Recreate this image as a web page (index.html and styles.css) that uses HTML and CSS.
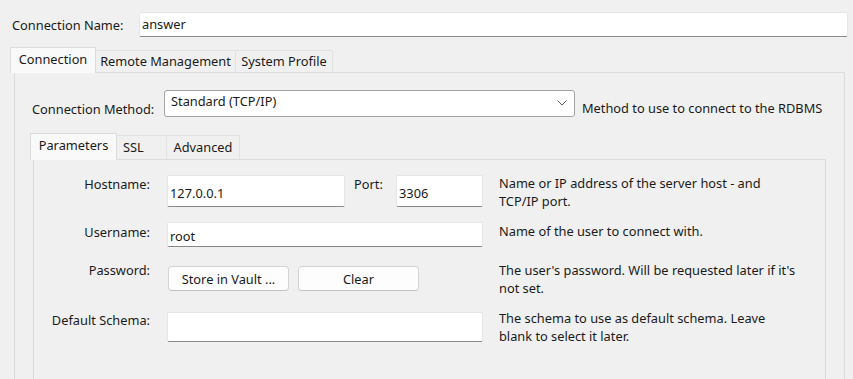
FILE: index.html
```html
<!DOCTYPE html>
<html lang="en">
<head>
  <meta charset="UTF-8" />
  <title>Connection Setup</title>
  <link rel="stylesheet" href="styles.css">
</head>
<body>
  <div class="name-row">
    <label class="name-label">Connection Name:</label>
    <div class="field name-field">answer</div>
  </div>

  <div class="tabs outer-tabs">
    <div class="tab active tab-conn">Connection</div>
    <div class="tab tab-remote">Remote Management</div>
    <div class="tab tab-profile">System Profile</div>
  </div>

  <div class="panel outer-panel">
    <div class="method-row">
      <label class="method-label">Connection Method:</label>
      <div class="select">
        <span>Standard (TCP/IP)</span>
        <svg class="chevron" width="10" height="6" viewBox="0 0 10 6">
          <path d="M0.5 0.5 L5 5 L9.5 0.5" fill="none" stroke="#606060" stroke-width="1"/>
        </svg>
      </div>
      <span class="method-desc">Method to use to connect to the RDBMS</span>
    </div>

    <div class="tabs inner-tabs">
      <div class="tab active tab-params">Parameters</div>
      <div class="tab tab-ssl">SSL</div>
      <div class="tab tab-adv">Advanced</div>
    </div>

    <div class="panel inner-panel">
      <!-- Hostname / Port -->
      <div class="form-row row-host">
        <label class="form-label">Hostname:</label>
        <div class="form-field">
          <div class="field host-field">127.0.0.1</div>
          <label class="port-label">Port:</label>
          <div class="field port-field">3306</div>
        </div>
        <div class="desc">Name or IP address of the server host - and<br>TCP/IP port.</div>
      </div>

      <!-- Username -->
      <div class="form-row row-user">
        <label class="form-label">Username:</label>
        <div class="form-field">
          <div class="field user-field">root</div>
        </div>
        <div class="desc">Name of the user to connect with.</div>
      </div>

      <!-- Password -->
      <div class="form-row row-pass">
        <label class="form-label">Password:</label>
        <div class="form-field">
          <button class="btn">Store in Vault ...</button>
          <button class="btn">Clear</button>
        </div>
        <div class="desc">The user's password. Will be requested later if it's<br>not set.</div>
      </div>

      <!-- Default schema -->
      <div class="form-row row-schema">
        <label class="form-label">Default Schema:</label>
        <div class="form-field">
          <div class="field schema-field"></div>
        </div>
        <div class="desc">The schema to use as default schema. Leave<br>blank to select it later.</div>
      </div>
    </div>
  </div>
</body>
</html>
```

FILE: styles.css
```css
body {
  margin: 0;
  background: #f0f0f0;
  font-family: "Noto Sans", "Open Sans", sans-serif;
  font-size: 12.8px;
  line-height: 16px;
  color: #1a1a1a;
  height: 379px;
  overflow: hidden;
}

/* text boxes */
.field {
  box-sizing: border-box;
  background: #fff;
  border: 1px solid #e6e6e6;
  border-bottom: 1px solid #8a8a8a;
  border-radius: 2px;
  padding: 0 2px;
  display: flex;
  align-items: center;
}

.name-row {
  display: flex;
  align-items: center;
  padding: 12px 5px 0 12px;
}
.name-label {
  width: 127px;
}
.name-field {
  flex: 1;
  height: 25px;
  padding-bottom: 2px;
}

/* tabs */
.tabs {
  display: flex;
  align-items: flex-end;
}
.tab {
  box-sizing: border-box;
  height: 22px;
  padding-top: 2px;
  text-align: center;
  background: #f0f0f0;
  border: 1px solid #e2e2e2;
  border-bottom: none;
  margin-left: -1px;
  white-space: nowrap;
}
.tab.active {
  height: 26px;
  padding-top: 3px;
  background: #f9f9f9;
  border-color: #dcdcdc;
  position: relative;
  z-index: 1;
  margin-bottom: -1px;
}
.outer-tabs {
  margin: 10px 0 0 11px;
}
.tab-conn { width: 86px; }
.tab-remote { width: 141px; }
.tab-profile { width: 98px; }

.panel {
  border: 1px solid #dcdcdc;
  border-bottom: none;
  background: #f0f0f0;
}
.outer-panel {
  margin-left: 14px;
  width: 831px;
  height: 307px;
  box-sizing: border-box;
  padding: 17px 0 0 17px;
}

.method-row {
  display: flex;
  align-items: center;
}
.method-label {
  width: 132px;
  padding-top: 10px;
}
.select {
  box-sizing: border-box;
  width: 411px;
  height: 27px;
  background: #fff;
  border: 1px solid #a4a4a4;
  border-radius: 3px;
  display: flex;
  align-items: center;
  justify-content: space-between;
  padding: 0 7px 5px 6px;
}
.select .chevron {
  margin-top: 3px;
}
.method-desc {
  margin-left: 7px;
  padding-top: 8px;
}

.inner-tabs {
  margin: 16px 0 0 -1px;
}
.inner-tabs .tab {
  height: 24px;
  padding-top: 3px;
}
.inner-tabs .tab.active {
  height: 27px;
  padding-top: 3px;
}
.tab-params { width: 87px; }
.tab-ssl { width: 51px; text-align: left; padding-left: 6px; }
.tab-adv { width: 74px; }

.inner-panel {
  margin-left: 1px;
  width: 793px;
  height: 220px;
  box-sizing: border-box;
  padding-top: 15px;
}

/* form rows */
.form-row {
  display: flex;
  align-items: flex-start;
}
.form-label {
  width: 116px;
  text-align: right;
  flex-shrink: 0;
}
.form-field {
  width: 316px;
  margin-left: 17px;
  display: flex;
  align-items: flex-start;
  flex-shrink: 0;
}
.desc {
  margin-left: 16px;
  line-height: 18px;
}
.row-host {
  height: 32px;
}
.row-host .form-label {
  padding-top: 1px;
}
.row-host .desc {
  margin-top: -1px;
}
.host-field {
  width: 178px;
  height: 32px;
  padding-top: 3px;
}
.port-label {
  width: 42px;
  padding: 1px 0 0 9px;
}
.port-field {
  width: 87px;
  height: 32px;
  padding-top: 3px;
}
.row-user {
  height: 25px;
  margin-top: 15px;
}
.row-user .form-label {
  padding-top: 2px;
}
.user-field {
  width: 316px;
  height: 25px;
  padding-top: 2px;
}
.row-pass {
  height: 25px;
  margin-top: 19px;
}
.row-pass .form-label {
  margin-top: -4px;
}
.row-pass .desc {
  margin-top: -5px;
}
.btn {
  box-sizing: border-box;
  width: 121px;
  height: 25px;
  margin-left: 1px;
  margin-right: 8px;
  background: #fdfdfd;
  border: 1px solid #d4d4d4;
  border-bottom-color: #c2c2c2;
  border-radius: 4px;
  font-family: inherit;
  font-size: inherit;
  color: #1a1a1a;
  padding: 0;
}
.row-schema {
  height: 30px;
  margin-top: 21px;
}
.row-schema .desc {
  margin-top: -3px;
}
.schema-field {
  width: 316px;
  height: 30px;
}
```
